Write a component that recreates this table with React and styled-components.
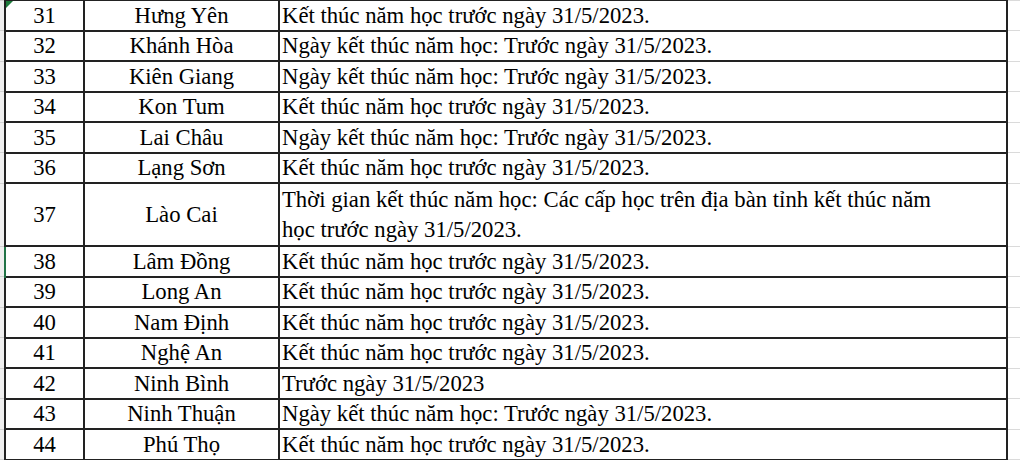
import React from 'react';
import styled, { createGlobalStyle } from 'styled-components';

const serif = `"Liberation Serif", "Times New Roman", Tinos, serif`;

const GlobalStyle = createGlobalStyle`
  html, body {
    margin: 0;
    padding: 0;
    background: #ffffff;
    overflow: hidden;
  }
  body {
    font-family: ${serif};
    color: #000;
  }
`;

const Sheet = styled.div`
  width: 1020px;
  height: 460px;
  overflow: hidden;
  background: #fff;
`;

const Grid = styled.table`
  border-collapse: collapse;
  table-layout: fixed;
  width: 1040px;
  margin-top: -1px;
  font-family: ${serif};
  font-size: 22.7px;
`;

const Row = styled.tr`
  height: ${(p) => (p.$tall ? 61 : 30.5)}px;
`;

const Edge = styled.td`
  width: 4px;
  padding: 0;
  background: #efefef;
  border-top: 1px solid #d2d2d2;
  border-bottom: 1px solid #d2d2d2;
  border-right: 2px solid ${(p) => (p.$active ? '#217346' : '#222')};
`;

const Cell = styled.td`
  position: relative;
  padding: 1px 2px 0;
  border: 2px solid #222;
  vertical-align: middle;
  text-align: ${(p) => (p.$left ? 'left' : 'center')};
  line-height: ${(p) => (p.$tall ? '30px' : '26px')};
  white-space: nowrap;
  overflow: hidden;
`;

const Spare = styled.td`
  padding: 0;
  border-top: 1px solid #dadada;
  border-bottom: 1px solid #dadada;
`;

const ErrorMark = styled.span`
  position: absolute;
  left: 0;
  top: 0;
  width: 0;
  height: 0;
  border-top: 7px solid #1e7b3c;
  border-right: 7px solid transparent;
`;

const A = 'Kết thúc năm học trước ngày 31/5/2023.';
const B = 'Ngày kết thúc năm học: Trước ngày 31/5/2023.';

const rows = [
  { no: 31, name: 'Hưng Yên', text: [A], mark: true },
  { no: 32, name: 'Khánh Hòa', text: [B] },
  { no: 33, name: 'Kiên Giang', text: [B] },
  { no: 34, name: 'Kon Tum', text: [A] },
  { no: 35, name: 'Lai Châu', text: [B] },
  { no: 36, name: 'Lạng Sơn', text: [A] },
  {
    no: 37,
    name: 'Lào Cai',
    text: [
      'Thời gian kết thúc năm học: Các cấp học trên địa bàn tỉnh kết thúc năm',
      'học trước ngày 31/5/2023.',
    ],
  },
  { no: 38, name: 'Lâm Đồng', text: [A], active: true },
  { no: 39, name: 'Long An', text: [A] },
  { no: 40, name: 'Nam Định', text: [A] },
  { no: 41, name: 'Nghệ An', text: [A] },
  { no: 42, name: 'Ninh Bình', text: ['Trước ngày 31/5/2023'] },
  { no: 43, name: 'Ninh Thuận', text: [B] },
  { no: 44, name: 'Phú Thọ', text: [A] },
  { no: 45, name: '', text: [A] },
];

function App() {
  return (
    <>
      <GlobalStyle />
      <Sheet>
        <Grid>
          <colgroup>
            <col style={{ width: 5 }} />
            <col style={{ width: 79 }} />
            <col style={{ width: 195 }} />
            <col style={{ width: 728 }} />
            <col />
          </colgroup>
          <tbody>
            {rows.map((r) => {
              const tall = r.text.length > 1;
              const last = r.no === 45;
              return (
                <Row key={r.no} $tall={tall}>
                  <Edge $active={r.active} />
                  <Cell $tall={tall}>
                    {r.mark && <ErrorMark />}
                    {last ? '' : r.no}
                  </Cell>
                  <Cell $tall={tall}>{r.name}</Cell>
                  <Cell $left $tall={tall}>
                    {r.text.map((t, i) => (
                      <React.Fragment key={i}>
                        {i > 0 && <br />}
                        {t}
                      </React.Fragment>
                    ))}
                  </Cell>
                  <Spare />
                </Row>
              );
            })}
          </tbody>
        </Grid>
      </Sheet>
    </>
  );
}

export default App;
